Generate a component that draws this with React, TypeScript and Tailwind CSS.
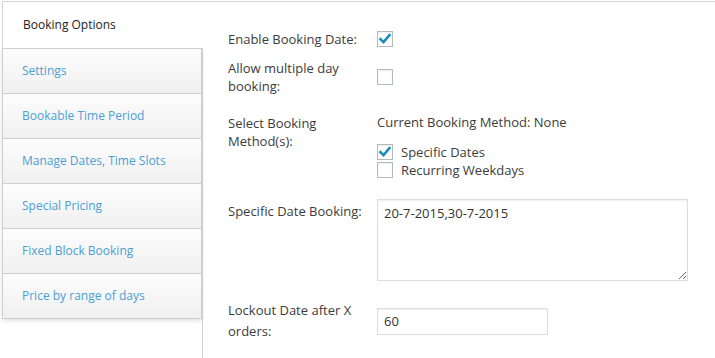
import React from 'react';

const tabs = [
  'Settings',
  'Bookable Time Period',
  'Manage Dates, Time Slots',
  'Special Pricing',
  'Fixed Block Booking',
  'Price by range of days',
];

function Box({ checked }: { checked?: boolean }) {
  return (
    <span className="flex h-4 w-4 items-center justify-center border border-[#b4b9be] bg-white shadow-[inset_0_1px_2px_rgba(0,0,0,0.07)]">
      {checked && (
        <svg width="14" height="14" viewBox="0 0 14 14">
          <path d="M2.5 7.2l3 2.9 6-7" fill="none" stroke="#1e8cbe" strokeWidth="2.6" strokeLinecap="square" />
        </svg>
      )}
    </span>
  );
}

export default function App() {
  return (
    <div className="h-[358px] w-[715px] overflow-hidden bg-white text-[13px] leading-[18px] text-[#3c3c3c]" style={{ fontFamily: '"Open Sans", sans-serif' }}>
      <div className="ml-[2px] mt-[1px] flex h-full border-t border-[#d4d4d4]">
        <div className="w-[200px] shrink-0">
          <div className="flex h-[46px] items-center border-l border-[#d4d4d4] bg-white pl-[20px] text-[12px] text-[#222]">
            Booking Options
          </div>
          <div className="shadow-[0_2px_4px_rgba(0,0,0,0.12)]">
            {tabs.map((t) => (
              <div
                key={t}
                className="-mt-px flex h-[46px] items-center border border-[#cfcfcf] bg-gradient-to-b from-[#fdfdfd] to-[#f0f0f0] pl-[19px] text-[12px] text-[#4b9fd5] first:mt-0"
              >
                {t}
              </div>
            ))}
          </div>
        </div>
        <div className="relative flex-1">
          <div className="absolute left-0 top-[46px] bottom-0 w-px bg-[#cfcfcf]" />
          <div className="pl-[26px]">
            <div className="mt-[28px] flex items-center">
              <div className="w-[149px]">Enable Booking Date:</div>
              <Box checked />
            </div>
            <div className="mt-[11px] flex items-center">
              <div className="w-[149px]">Allow multiple day booking:</div>
              <Box />
            </div>
            <div className="mt-[18px] flex">
              <div className="w-[149px] pt-px">Select Booking Method(s):</div>
              <div>
                <div>Current Booking Method: None</div>
                <div className="mt-[12px] flex items-center gap-[8px]">
                  <Box checked />
                  <span>Specific Dates</span>
                </div>
                <div className="flex items-center gap-[8px]">
                  <Box />
                  <span>Recurring Weekdays</span>
                </div>
              </div>
            </div>
            <div className="mt-[20px] flex">
              <div className="w-[149px] pt-[3px]">Specific Date Booking:</div>
              <textarea
                defaultValue="20-7-2015,30-7-2015"
                className="h-[82px] w-[311px] border border-[#ddd] px-[6px] py-[4px] text-[13px] leading-[18px] text-[#333] shadow-[inset_0_1px_2px_rgba(0,0,0,0.07)] outline-none"
                style={{ fontFamily: '"Open Sans", sans-serif' }}
              />
            </div>
            <div className="mt-[19px] flex items-center">
              <div className="w-[149px] leading-[21px]">Lockout Date after X orders:</div>
              <input
                defaultValue="60"
                className="h-[27px] w-[171px] border border-[#ddd] px-[6px] text-[13px] text-[#333] shadow-[inset_0_1px_2px_rgba(0,0,0,0.07)] outline-none"
                style={{ fontFamily: '"Open Sans", sans-serif' }}
              />
            </div>
          </div>
        </div>
      </div>
    </div>
  );
}
